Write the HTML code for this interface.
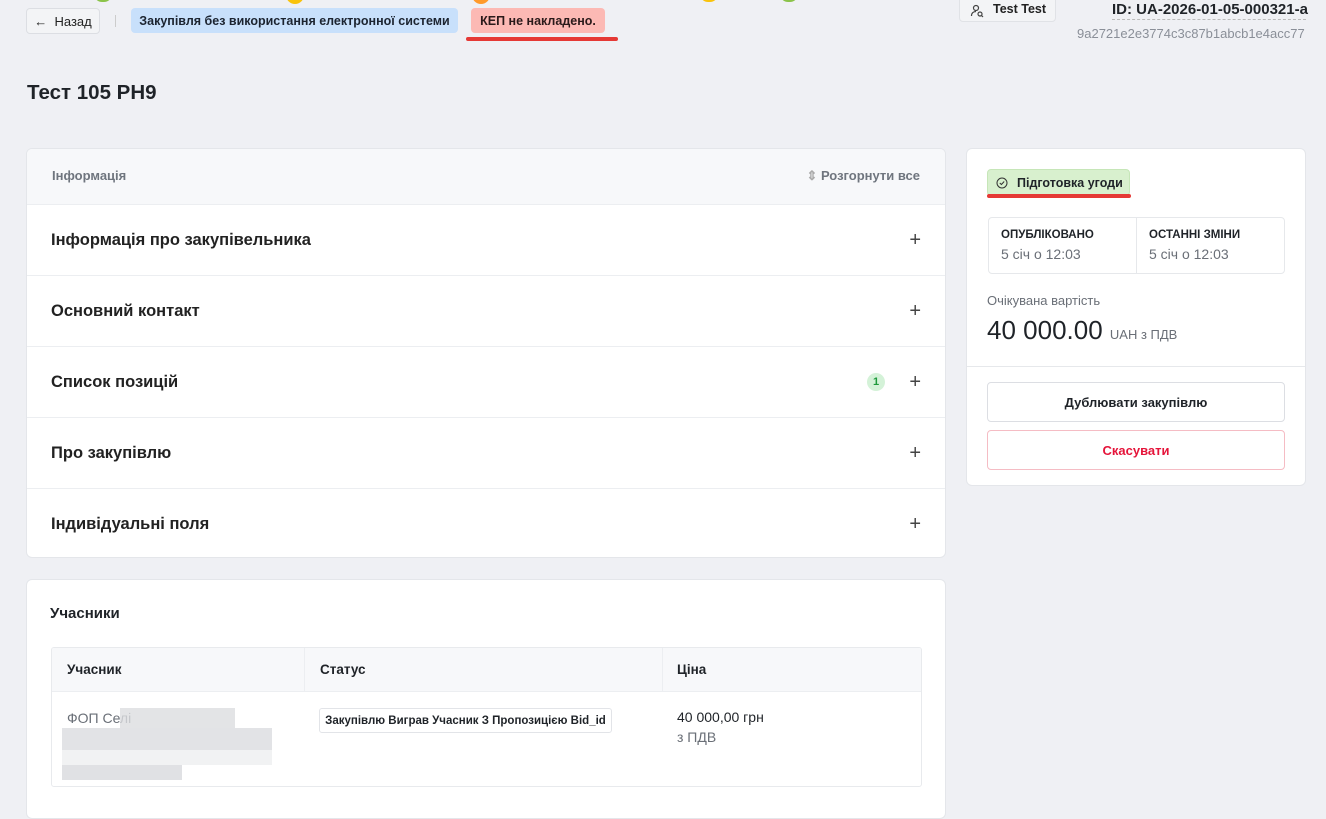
<!DOCTYPE html>
<html><head><meta charset="utf-8"><style>
*{box-sizing:border-box;margin:0;padding:0}
body{width:1326px;height:802px;overflow:hidden;background:#eff0f4;font-family:"Liberation Sans","Noto Sans CJK SC",sans-serif;color:#1f2328;position:relative}
.abs{position:absolute}
.card{position:absolute;background:#fff;border:1px solid #e4e6ea;border-radius:6px;overflow:hidden}
.row{position:absolute;left:0;right:0;height:71px;border-top:1px solid #eceef1;display:flex;align-items:center;padding-left:24px;font-size:16.5px;font-weight:bold;color:#222}
.plus{position:absolute;right:24px;font-size:20px;font-weight:normal;color:#444}
.pill{position:absolute;border-radius:4px;font-size:12.5px;font-weight:bold;display:flex;align-items:center;justify-content:center;white-space:nowrap}
</style></head><body>
<div class="abs" style="left:94px;top:-6px;width:18px;height:8px;background:#8bc34a;border-radius:0 0 9px 9px"></div>
<div class="abs" style="left:286px;top:-6px;width:18px;height:10px;background:#f9c30c;border-radius:0 0 9px 9px"></div>
<div class="abs" style="left:472px;top:-6px;width:18px;height:10px;background:#ff9a2a;border-radius:0 0 9px 9px"></div>
<div class="abs" style="left:700px;top:-6px;width:18px;height:8px;background:#f9c30c;border-radius:0 0 9px 9px"></div>
<div class="abs" style="left:780px;top:-6px;width:18px;height:8px;background:#8bc34a;border-radius:0 0 9px 9px"></div>

<div class="pill" style="left:26px;top:8px;width:74px;height:26px;border:1px solid #dcdee3;background:#f3f4f6;font-weight:normal;color:#222;font-size:13px">← &nbsp;Назад</div>
<div class="abs" style="left:115px;top:15px;width:1px;height:12px;background:#ccc"></div>
<div class="pill" style="left:131px;top:8px;width:327px;height:25px;background:#c8e0fb;color:#1c2430">Закупівля без використання електронної системи</div>
<div class="pill" style="left:471px;top:8px;width:134px;height:25px;background:#fcb9b4;color:#2a1a1a">КЕП не накладено.</div>
<div class="abs" style="left:466px;top:37px;width:152px;height:4px;background:#e53935;border-radius:2px"></div>

<div class="pill" style="left:959px;top:-4px;width:97px;height:26px;border:1px solid #e0e2e6;background:#f3f4f6;color:#222;font-size:12.5px;justify-content:flex-start;padding-left:33px">Test Test
<svg width="14" height="14" viewBox="0 0 14 14" style="position:absolute;left:10px;top:7px" fill="none" stroke="#444" stroke-width="1.2"><circle cx="6" cy="4" r="2.5"/><path d="M1.5 12c0-3 2-4.5 4.5-4.5"/><circle cx="10" cy="10" r="2"/><path d="M11.5 11.5l1.5 1.5"/></svg></div>
<div class="abs" style="left:1112px;top:1px;font-size:15px;font-weight:bold;color:#1f2328;white-space:nowrap">ID: UA-2026-01-05-000321-a</div>
<div class="abs" style="left:1112px;top:19px;width:194px;border-top:1px dashed #bbb"></div>
<div class="abs" style="left:1077px;top:26px;font-size:13px;color:#8a8f98">9a2721e2e3774c3c87b1abcb1e4acc77</div>

<div class="abs" style="left:27px;top:81px;font-size:20.5px;font-weight:bold;color:#1f2328">Тест 105 PH9</div>

<div class="card" style="left:26px;top:148px;width:920px;height:410px">
  <div class="abs" style="left:0;top:0;right:0;height:55px;background:#f7f8fa"></div>
  <div class="abs" style="left:25px;top:19px;font-size:13px;font-weight:bold;color:#6f757e">Інформація</div>
  <div class="abs" style="right:25px;top:19px;font-size:13px;font-weight:bold;color:#6f757e"><span style="color:#aaa">⇕</span> Розгорнути все</div>
  <div class="row" style="top:55px">Інформація про закупівельника<span class="plus">+</span></div>
  <div class="row" style="top:126px">Основний контакт<span class="plus">+</span></div>
  <div class="row" style="top:197px">Список позицій<span class="abs" style="right:60px;width:18px;height:18px;border-radius:9px;background:#d4f2d8;color:#1e9a3c;font-size:11px;display:flex;align-items:center;justify-content:center">1</span><span class="plus">+</span></div>
  <div class="row" style="top:268px">Про закупівлю<span class="plus">+</span></div>
  <div class="row" style="top:339px">Індивідуальні поля<span class="plus">+</span></div>
</div>

<div class="card" style="left:26px;top:579px;width:920px;height:240px">
  <div class="abs" style="left:23px;top:25px;font-size:15px;font-weight:bold">Учасники</div>
  <div class="abs" style="left:24px;top:67px;width:871px;height:140px;border:1px solid #e8eaed;border-radius:3px;overflow:hidden">
    <div class="abs" style="left:0;top:0;right:0;height:44px;background:#f7f8fa;border-bottom:1px solid #eceef1"></div>
    <div class="abs" style="left:252px;top:0;width:1px;height:44px;background:#eceef1"></div>
    <div class="abs" style="left:610px;top:0;width:1px;height:44px;background:#eceef1"></div>
    <div class="abs" style="left:15px;top:14px;font-size:13.5px;font-weight:bold">Учасник</div>
    <div class="abs" style="left:268px;top:14px;font-size:13.5px;font-weight:bold">Статус</div>
    <div class="abs" style="left:625px;top:14px;font-size:13.5px;font-weight:bold">Ціна</div>
    <div class="abs" style="left:15px;top:62px;font-size:14px;color:#6a6f77">ФОП Селі</div>
    <div class="abs" style="left:68px;top:60px;width:115px;height:28px;background:#dcdde0;opacity:.8"></div>
    <div class="abs" style="left:10px;top:80px;width:210px;height:22px;background:#e2e3e6"></div>
    <div class="abs" style="left:10px;top:102px;width:210px;height:15px;background:#f1f2f3"></div>
    <div class="abs" style="left:10px;top:117px;width:120px;height:15px;background:#e0e1e4"></div>
    <div class="abs" style="left:267px;top:60px;width:293px;height:25px;border:1px solid #e2e4e8;border-radius:3px;font-size:11.5px;font-weight:bold;display:flex;align-items:center;justify-content:center">Закупівлю Виграв Учасник З Пропозицією Bid_id</div>
    <div class="abs" style="left:625px;top:61px;font-size:14px;color:#1f2328">40 000,00 грн</div>
    <div class="abs" style="left:625px;top:81px;font-size:14px;color:#6a6f77">з ПДВ</div>
  </div>
</div>

<div class="card" style="left:966px;top:148px;width:340px;height:338px">
  <div class="pill" style="left:20px;top:20px;width:143px;height:27px;background:#d8f0ce;border:1px solid #c6e6b8;color:#1f2328;justify-content:flex-start;padding-left:29px">Підготовка угоди</div>
  <svg class="abs" style="left:29px;top:28px" width="12" height="12" viewBox="0 0 12 12" fill="none" stroke="#333" stroke-width="1"><circle cx="6" cy="6" r="5"/><path d="M3.8 6l1.6 1.5 2.8-3"/></svg>
  <div class="abs" style="left:20px;top:45px;width:144px;height:4px;background:#e53935;border-radius:2px"></div>
  <div class="abs" style="left:21px;top:68px;width:297px;height:57px;border:1px solid #e6e8eb;border-radius:4px">
    <div class="abs" style="left:147px;top:0;width:1px;height:55px;background:#e6e8eb"></div>
    <div class="abs" style="left:12px;top:11px;font-size:11.5px;font-weight:bold">ОПУБЛІКОВАНО</div>
    <div class="abs" style="left:12px;top:28px;font-size:14px;color:#6a6f77">5 січ о 12:03</div>
    <div class="abs" style="left:160px;top:11px;font-size:11.5px;font-weight:bold">ОСТАННІ ЗМІНИ</div>
    <div class="abs" style="left:160px;top:28px;font-size:14px;color:#6a6f77">5 січ о 12:03</div>
  </div>
  <div class="abs" style="left:20px;top:144px;font-size:13px;color:#6a6f77">Очікувана вартість</div>
  <div class="abs" style="left:20px;top:166px;font-size:26px;color:#1f2328;white-space:nowrap">40 000.00 <span style="font-size:13px;color:#6a6f77">UAH з ПДВ</span></div>
  <div class="abs" style="left:0;top:217px;right:0;height:1px;background:#e6e8eb"></div>
  <div class="abs" style="left:20px;top:233px;width:298px;height:40px;border:1px solid #dcdee3;border-radius:4px;font-size:13px;font-weight:bold;display:flex;align-items:center;justify-content:center">Дублювати закупівлю</div>
  <div class="abs" style="left:20px;top:281px;width:298px;height:40px;border:1px solid #f5bcc4;border-radius:4px;font-size:13px;font-weight:bold;color:#e5143a;display:flex;align-items:center;justify-content:center">Скасувати</div>
</div>
</body></html>
